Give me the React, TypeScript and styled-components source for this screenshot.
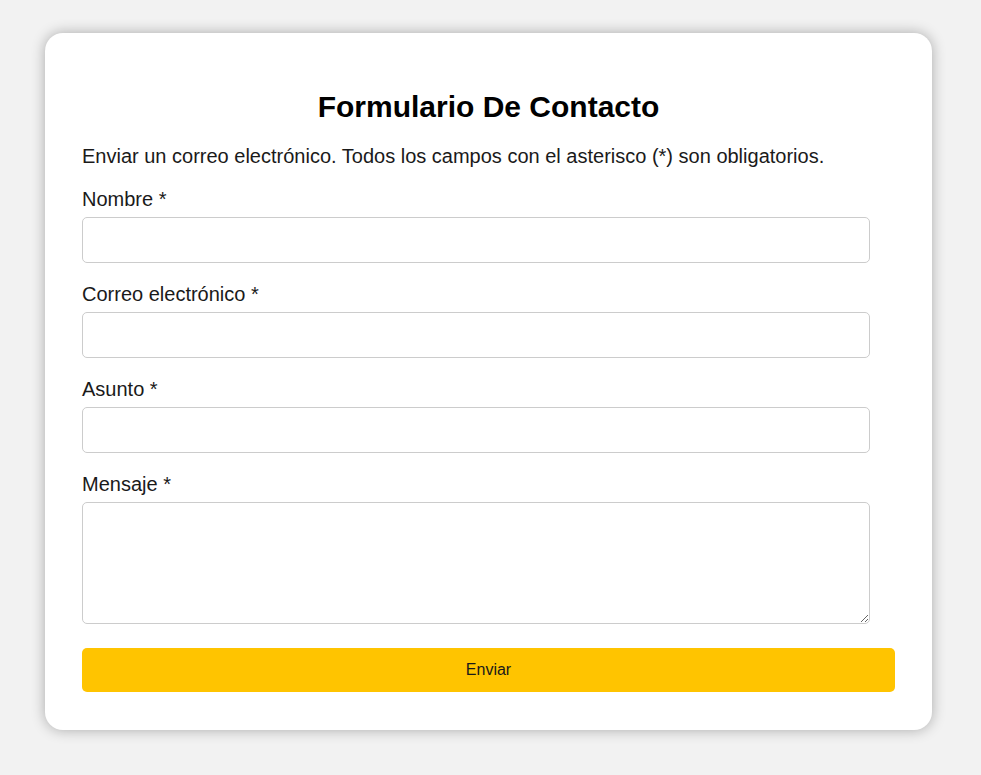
import React from "react";
import styled, { createGlobalStyle } from "styled-components";

const GlobalStyle = createGlobalStyle`
  * { box-sizing: border-box; }
  html, body {
    margin: 0;
    padding: 0;
    background: #f2f2f2;
    font-family: "Liberation Sans", Arial, sans-serif;
  }
`;

const Page = styled.div`
  padding: 33px 0 45px 45px;
`;

const Card = styled.form`
  width: 887px;
  background: #ffffff;
  border-radius: 18px;
  box-shadow: 0 0 14px rgba(0, 0, 0, 0.3);
  padding: 37px 37px 38px;
`;

const Title = styled.h2`
  margin: 20px 0 21px;
  text-align: center;
  font-size: 30px;
  font-weight: 700;
  color: #000;
`;

const Intro = styled.p`
  margin: 0 0 20px;
  font-size: 20px;
  color: #1a1a1a;
`;

const Field = styled.div`
  display: flex;
  flex-direction: column;
`;

const Label = styled.label`
  display: block;
  font-size: 20px;
  line-height: 23px;
  margin-bottom: 6px;
  color: #1a1a1a;
`;

const Input = styled.input`
  display: block;
  width: 788px;
  height: 46px;
  margin: 0 0 20px;
  padding: 10px;
  border: 1px solid #cccccc;
  border-radius: 5px;
  font-size: 16px;
  font-family: inherit;
  background: #fff;
`;

const TextArea = styled.textarea`
  display: block;
  width: 788px;
  height: 122px;
  margin: 0 0 24px;
  padding: 10px;
  border: 1px solid #cccccc;
  border-radius: 5px;
  font-size: 16px;
  font-family: inherit;
  background: #fff;
`;

const Button = styled.button`
  display: block;
  width: 100%;
  height: 44px;
  border: none;
  border-radius: 5px;
  background: #ffc400;
  color: #1a1a1a;
  font-size: 16px;
  font-family: "Liberation Sans", Arial, sans-serif;
  cursor: pointer;
`;

export default function App() {
  return (
    <>
      <GlobalStyle />
      <Page>
        <Card onSubmit={(e) => e.preventDefault()}>
          <Title>Formulario De Contacto</Title>
          <Intro>
            Enviar un correo electrónico. Todos los campos con el asterisco (*) son obligatorios.
          </Intro>
          <Field>
            <Label htmlFor="nombre">Nombre *</Label>
            <Input id="nombre" type="text" />
          </Field>
          <Field>
            <Label htmlFor="correo">Correo electrónico *</Label>
            <Input id="correo" type="email" />
          </Field>
          <Field>
            <Label htmlFor="asunto">Asunto *</Label>
            <Input id="asunto" type="text" />
          </Field>
          <Field>
            <Label htmlFor="mensaje">Mensaje *</Label>
            <TextArea id="mensaje" />
          </Field>
          <Button type="submit">Enviar</Button>
        </Card>
      </Page>
    </>
  );
}
